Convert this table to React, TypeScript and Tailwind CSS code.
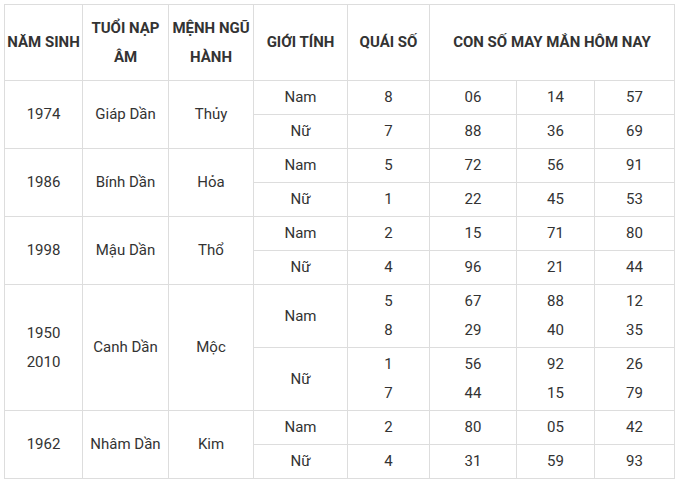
const groups = [
  {
    year: ["1974"],
    tuoi: "Giáp Dần",
    menh: "Thủy",
    rows: [
      { gender: "Nam", quai: ["8"], nums: [["06"], ["14"], ["57"]] },
      { gender: "Nữ", quai: ["7"], nums: [["88"], ["36"], ["69"]] },
    ],
  },
  {
    year: ["1986"],
    tuoi: "Bính Dần",
    menh: "Hỏa",
    rows: [
      { gender: "Nam", quai: ["5"], nums: [["72"], ["56"], ["91"]] },
      { gender: "Nữ", quai: ["1"], nums: [["22"], ["45"], ["53"]] },
    ],
  },
  {
    year: ["1998"],
    tuoi: "Mậu Dần",
    menh: "Thổ",
    rows: [
      { gender: "Nam", quai: ["2"], nums: [["15"], ["71"], ["80"]] },
      { gender: "Nữ", quai: ["4"], nums: [["96"], ["21"], ["44"]] },
    ],
  },
  {
    year: ["1950", "2010"],
    tuoi: "Canh Dần",
    menh: "Mộc",
    rows: [
      { gender: "Nam", quai: ["5", "8"], nums: [["67", "29"], ["88", "40"], ["12", "35"]] },
      { gender: "Nữ", quai: ["1", "7"], nums: [["56", "44"], ["92", "15"], ["26", "79"]] },
    ],
  },
  {
    year: ["1962"],
    tuoi: "Nhâm Dần",
    menh: "Kim",
    rows: [
      { gender: "Nam", quai: ["2"], nums: [["80"], ["05"], ["42"]] },
      { gender: "Nữ", quai: ["4"], nums: [["31"], ["59"], ["93"]] },
    ],
  },
];

function Lines({ items }: { items: string[] }) {
  return (
    <>
      {items.map((t, i) => (
        <div key={i} className="leading-[29px]">
          {t}
        </div>
      ))}
    </>
  );
}

const cell = "border border-[#dddddd] text-center align-middle p-0";

export default function App() {
  return (
    <div className="min-h-[488px] w-[680px] bg-white pt-[4px] pl-[4px] font-['Roboto',sans-serif] text-[15px] text-[#333333]">
      <table className="table-fixed border-collapse w-[670px]">
        <colgroup>
          <col className="w-[78px]" />
          <col className="w-[86px]" />
          <col className="w-[85px]" />
          <col className="w-[94px]" />
          <col className="w-[82px]" />
          <col className="w-[87px]" />
          <col className="w-[78px]" />
          <col className="w-[80px]" />
        </colgroup>
        <thead>
          <tr className="h-[76px] font-bold">
            <th className={cell}>NĂM SINH</th>
            <th className={cell}>
              <Lines items={["TUỔI NẠP", "ÂM"]} />
            </th>
            <th className={cell}>
              <Lines items={["MỆNH NGŨ", "HÀNH"]} />
            </th>
            <th className={cell}>GIỚI TÍNH</th>
            <th className={cell}>QUÁI SỐ</th>
            <th className={cell} colSpan={3}>
              CON SỐ MAY MẮN HÔM NAY
            </th>
          </tr>
        </thead>
        <tbody>
          {groups.map((g) =>
            g.rows.map((r, i) => (
              <tr key={g.tuoi + r.gender} className={g.year.length > 1 ? "h-[63px]" : "h-[34px]"}>
                {i === 0 && (
                  <>
                    <td className={cell} rowSpan={2}>
                      <Lines items={g.year} />
                    </td>
                    <td className={cell} rowSpan={2}>
                      {g.tuoi}
                    </td>
                    <td className={cell} rowSpan={2}>
                      {g.menh}
                    </td>
                  </>
                )}
                <td className={cell}>{r.gender}</td>
                <td className={cell}>
                  <Lines items={r.quai} />
                </td>
                {r.nums.map((n, j) => (
                  <td key={j} className={cell}>
                    <Lines items={n} />
                  </td>
                ))}
              </tr>
            ))
          )}
        </tbody>
      </table>
    </div>
  );
}
